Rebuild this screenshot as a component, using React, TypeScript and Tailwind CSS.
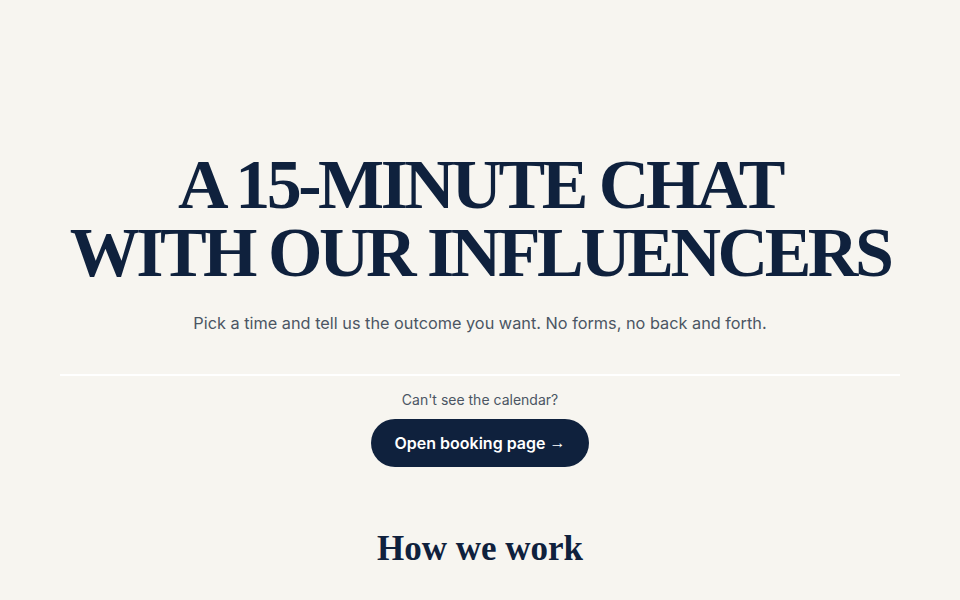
export default function App() {
  return (
    <div className="min-h-screen bg-[#f7f5f0] font-['Inter',sans-serif] text-[#0f213d]">
      <main className="mx-auto flex max-w-[840px] flex-col items-center pt-[151px]">
        <h1 className="whitespace-nowrap text-center font-['Liberation_Serif',serif] text-[70px] font-bold uppercase leading-[68px] tracking-[-0.05em]">
          A 15-Minute Chat
          <br />
          With Our Influencers
        </h1>
        <p className="mt-[24px] text-center text-[16.3px] leading-6 text-[#4b5563]">
          Pick a time and tell us the outcome you want. No forms, no back and forth.
        </p>
        <div className="mt-[39px] h-[2px] w-full bg-white" />
        <p className="mt-[14px] text-sm leading-5 text-[#4b5563]">Can't see the calendar?</p>
        <a
          href="#"
          className="mt-[9px] inline-flex h-12 items-center rounded-full bg-[#0f213d] px-6 text-base font-semibold text-white"
        >
          Open booking page <span className="ml-1 font-['Liberation_Sans',sans-serif]">→</span>
        </a>
        <h2 className="mt-[62px] font-['Liberation_Serif',serif] text-[35px] font-bold leading-10">How we work</h2>
      </main>
    </div>
  );
}
